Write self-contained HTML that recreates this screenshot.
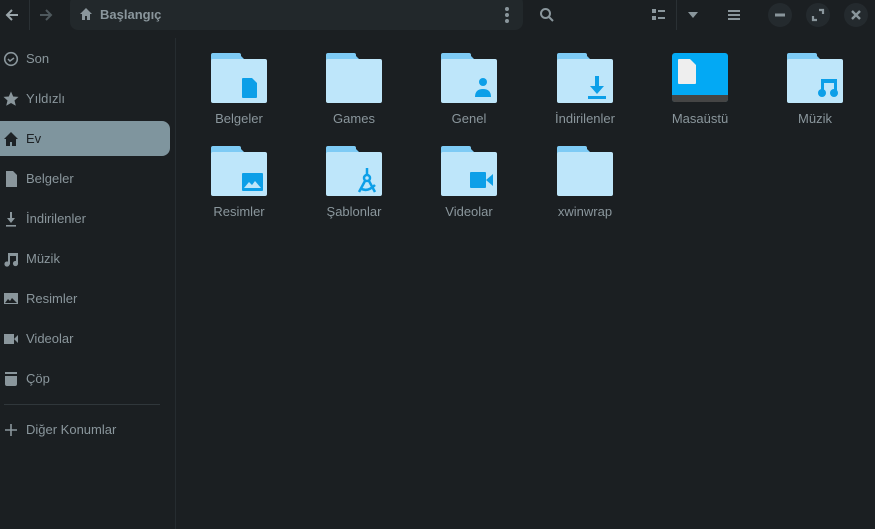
<!DOCTYPE html>
<html><head><meta charset="utf-8"><style>
*{margin:0;padding:0;box-sizing:border-box}
body{width:875px;height:529px;background:#1b1f22;font-family:"Liberation Sans","DejaVu Sans",sans-serif;color:#8a969c;position:relative;overflow:hidden;font-size:13px}
.a{position:absolute}
.path{left:70px;top:-5px;width:453px;height:35px;background:#22282b;border-radius:8px}
.side{left:0;top:38px;width:176px;height:491px;border-right:1px solid #262c30}
.it{position:absolute;left:0;width:170px;height:35px;display:flex;align-items:center;padding-left:26px;font-size:13px}
.it svg{position:absolute;left:3px;top:10px}
.sel{background:#7f959e;border-radius:0 8px 8px 0;color:#1d2225}
.lbl{position:absolute;width:110px;text-align:center;font-size:13px;color:#8a969c}
</style></head><body>
<div class="a path"></div>
<svg class="a" style="left:4px;top:7px" width="16" height="16" viewBox="0 0 16 16"><path d="M14 8H3M8 3L3 8l5 5" stroke="#9aa5aa" stroke-width="2" fill="none"/></svg>
<div class="a" style="left:29px;top:0;width:1px;height:30px;background:#2a3034"></div>
<svg class="a" style="left:38px;top:7px" width="16" height="16" viewBox="0 0 16 16"><path d="M2 8h11M8 3l5 5-5 5" stroke="#4e585d" stroke-width="2" fill="none"/></svg>
<svg class="a" style="left:79px;top:7px" width="14" height="14" viewBox="0 0 14 14"><path d="M7 1L1 7h2v6h3V9h2v4h3V7h2z" fill="#8a969c"/></svg>
<div class="a" style="left:100px;top:7px;font-weight:bold;font-size:13px;color:#8a969c">Başlangıç</div>
<svg class="a" style="left:504px;top:6px" width="6" height="18"><circle cx="3" cy="3" r="2" fill="#8a969c"/><circle cx="3" cy="9" r="2" fill="#8a969c"/><circle cx="3" cy="15" r="2" fill="#8a969c"/></svg>
<svg class="a" style="left:539px;top:7px" width="16" height="16" viewBox="0 0 16 16"><circle cx="6.5" cy="6.5" r="4.5" stroke="#8a969c" stroke-width="2" fill="none"/><path d="M10 10l4 4" stroke="#8a969c" stroke-width="2"/></svg>
<svg class="a" style="left:652px;top:9px" width="14" height="12"><rect x="0" y="0" width="4" height="4" fill="#8a969c"/><rect x="6" y="1" width="7" height="2" fill="#8a969c"/><rect x="0" y="7" width="4" height="4" fill="#8a969c"/><rect x="6" y="8" width="7" height="2" fill="#8a969c"/></svg>
<div class="a" style="left:676px;top:0;width:1px;height:30px;background:#2a3034"></div>
<svg class="a" style="left:688px;top:12px" width="10" height="6"><path d="M0 0h10L5 6z" fill="#8a969c"/></svg>
<svg class="a" style="left:728px;top:9px" width="12" height="12"><rect y="1" width="12" height="2" fill="#8a969c"/><rect y="5" width="12" height="2" fill="#8a969c"/><rect y="9" width="12" height="2" fill="#8a969c"/></svg>
<svg class="a" style="left:760px;top:0" width="115" height="30">
<circle cx="20" cy="15" r="12" fill="#242a2e"/><rect x="15" y="13.5" width="10" height="3" fill="#8a969c"/>
<circle cx="58" cy="15" r="12" fill="#242a2e"/><path d="M59 10h4v4M57 20h-4v-4" stroke="#8a969c" stroke-width="2.2" fill="none"/>
<circle cx="96" cy="15" r="12" fill="#242a2e"/><path d="M92 11l8 8M100 11l-8 8" stroke="#8a969c" stroke-width="2.4"/>
</svg>

<div class="a side">
<div class="it" style="top:3px"><svg width="16" height="16" viewBox="0 0 16 16"><circle cx="8" cy="8" r="6.3" stroke="#8a969c" stroke-width="1.6" fill="none"/><path d="M5 8l2 2 4-3" stroke="#8a969c" stroke-width="1.5" fill="none"/></svg>Son</div>
<div class="it" style="top:43px"><svg width="16" height="16" viewBox="0 0 16 16"><path d="M8 0.5l2.2 5 5.3.4-4 3.6 1.3 5.3L8 12l-4.8 2.8 1.3-5.3-4-3.6 5.3-.4z" fill="#8a969c"/></svg>Yıldızlı</div>
<div class="it sel" style="top:83px"><svg width="16" height="16" viewBox="0 0 16 16"><path d="M8 1L1 8h2v7h4v-4h2v4h4V8h2z" fill="#1d2225"/></svg>Ev</div>
<div class="it" style="top:123px"><svg width="16" height="16" viewBox="0 0 16 16"><path d="M3 0h7l4 4v12H3z" fill="#8a969c"/></svg>Belgeler</div>
<div class="it" style="top:163px"><svg width="16" height="16" viewBox="0 0 16 16"><path d="M7 1h2v6h3l-4 5-4-5h3z" fill="#8a969c"/><rect x="3" y="14" width="10" height="1.6" fill="#8a969c"/></svg>İndirilenler</div>
<div class="it" style="top:203px"><svg width="16" height="16" viewBox="0 0 16 16"><path d="M5 2h10v10.5h-2V5H7v8.5h-2z" fill="#8a969c"/><circle cx="4" cy="13" r="2.6" fill="#8a969c"/><circle cx="12.5" cy="12.5" r="2.6" fill="#8a969c"/></svg>Müzik</div>
<div class="it" style="top:243px"><svg width="16" height="16" viewBox="0 0 16 16"><rect x="1" y="2" width="14" height="11" fill="#8a969c"/><path d="M2 12l3-4 2 2 2-3 5 5z" fill="#1b1f22"/></svg>Resimler</div>
<div class="it" style="top:283px"><svg width="16" height="16" viewBox="0 0 16 16"><rect x="1" y="3" width="10" height="10" fill="#8a969c"/><path d="M11 8l4-4v8z" fill="#8a969c"/></svg>Videolar</div>
<div class="it" style="top:323px"><svg width="16" height="16" viewBox="0 0 16 16"><rect x="2" y="1" width="12" height="2" fill="#8a969c"/><path d="M2 5h12v8q0 2-2 2H4q-2 0-2-2z" fill="#8a969c"/></svg>Çöp</div>
<div class="a" style="left:4px;top:366px;width:156px;height:1px;background:#30373b"></div>
<div class="it" style="top:374px"><svg width="16" height="16" viewBox="0 0 16 16"><path d="M8 2v12M2 8h12" stroke="#8a969c" stroke-width="1.6"/></svg>Diğer Konumlar</div>
</div>

<svg width="0" height="0" style="position:absolute"><defs>
<g id="f"><path d="M2 0h25l6 6H2z" fill="#7ecbf5"/><rect x="0" y="0" width="30" height="10" rx="2" fill="#7ecbf5"/><rect x="0" y="6" width="56" height="44" rx="2" fill="#bee6fa"/></g>
</defs></svg>

<svg class="a" style="left:211px;top:53px" width="56" height="50"><use href="#f"/><path d="M32 25h9l5 5v14q0 1-1 1H32q-1 0-1-1V26q0-1 1-1z" fill="#0c9fe8"/></svg>
<svg class="a" style="left:326px;top:53px" width="56" height="50"><use href="#f"/></svg>
<svg class="a" style="left:441px;top:53px" width="56" height="50"><use href="#f"/><circle cx="42" cy="29" r="4" fill="#0c9fe8"/><path d="M34 44q0-8 8-8t8 8z" fill="#0c9fe8"/></svg>
<svg class="a" style="left:557px;top:53px" width="56" height="50"><use href="#f"/><path d="M38 23h4v10h5l-7 8-7-8h5z" fill="#0c9fe8"/><rect x="31" y="43" width="18" height="3" fill="#0c9fe8"/></svg>
<svg class="a" style="left:672px;top:53px" width="56" height="50"><rect width="56" height="49" rx="3" fill="#03a9f4"/><path d="M0 42h56v4q0 3-3 3H3q-3 0-3-3z" fill="#454545"/><path d="M7 6h11l6 6v18q0 1-1 1H7q-1 0-1-1V7q0-1 1-1z" fill="#eeeeee"/></svg>
<svg class="a" style="left:787px;top:53px" width="56" height="50"><use href="#f"/><path d="M34 26h16v16h-3V30h-10v12h-3z" fill="#0c9fe8"/><circle cx="35" cy="40" r="4" fill="#0c9fe8"/><circle cx="47" cy="40" r="4" fill="#0c9fe8"/></svg>

<svg class="a" style="left:211px;top:146px" width="56" height="50"><use href="#f"/><rect x="31" y="27" width="21" height="18" rx="1" fill="#0c9fe8"/><path d="M33 42l5-6 3 3 3-4 6 7z" fill="#bee6fa"/></svg>
<svg class="a" style="left:326px;top:146px" width="56" height="50"><use href="#f"/><g stroke="#0c9fe8" stroke-width="2.5" fill="none"><circle cx="41" cy="32" r="3"/><path d="M41 22v7M39 35l-6 11M43 35l6 11M34 42q7 5 15-3"/></g></svg>
<svg class="a" style="left:441px;top:146px" width="56" height="50"><use href="#f"/><rect x="29" y="26" width="16" height="16" rx="1" fill="#0c9fe8"/><path d="M45 34l7-6v12z" fill="#0c9fe8"/></svg>
<svg class="a" style="left:557px;top:146px" width="56" height="50"><use href="#f"/></svg>

<div class="lbl" style="left:184px;top:111px">Belgeler</div>
<div class="lbl" style="left:299px;top:111px">Games</div>
<div class="lbl" style="left:414px;top:111px">Genel</div>
<div class="lbl" style="left:530px;top:111px">İndirilenler</div>
<div class="lbl" style="left:645px;top:111px">Masaüstü</div>
<div class="lbl" style="left:760px;top:111px">Müzik</div>
<div class="lbl" style="left:184px;top:204px">Resimler</div>
<div class="lbl" style="left:299px;top:204px">Şablonlar</div>
<div class="lbl" style="left:414px;top:204px">Videolar</div>
<div class="lbl" style="left:530px;top:204px">xwinwrap</div>
</body></html>
